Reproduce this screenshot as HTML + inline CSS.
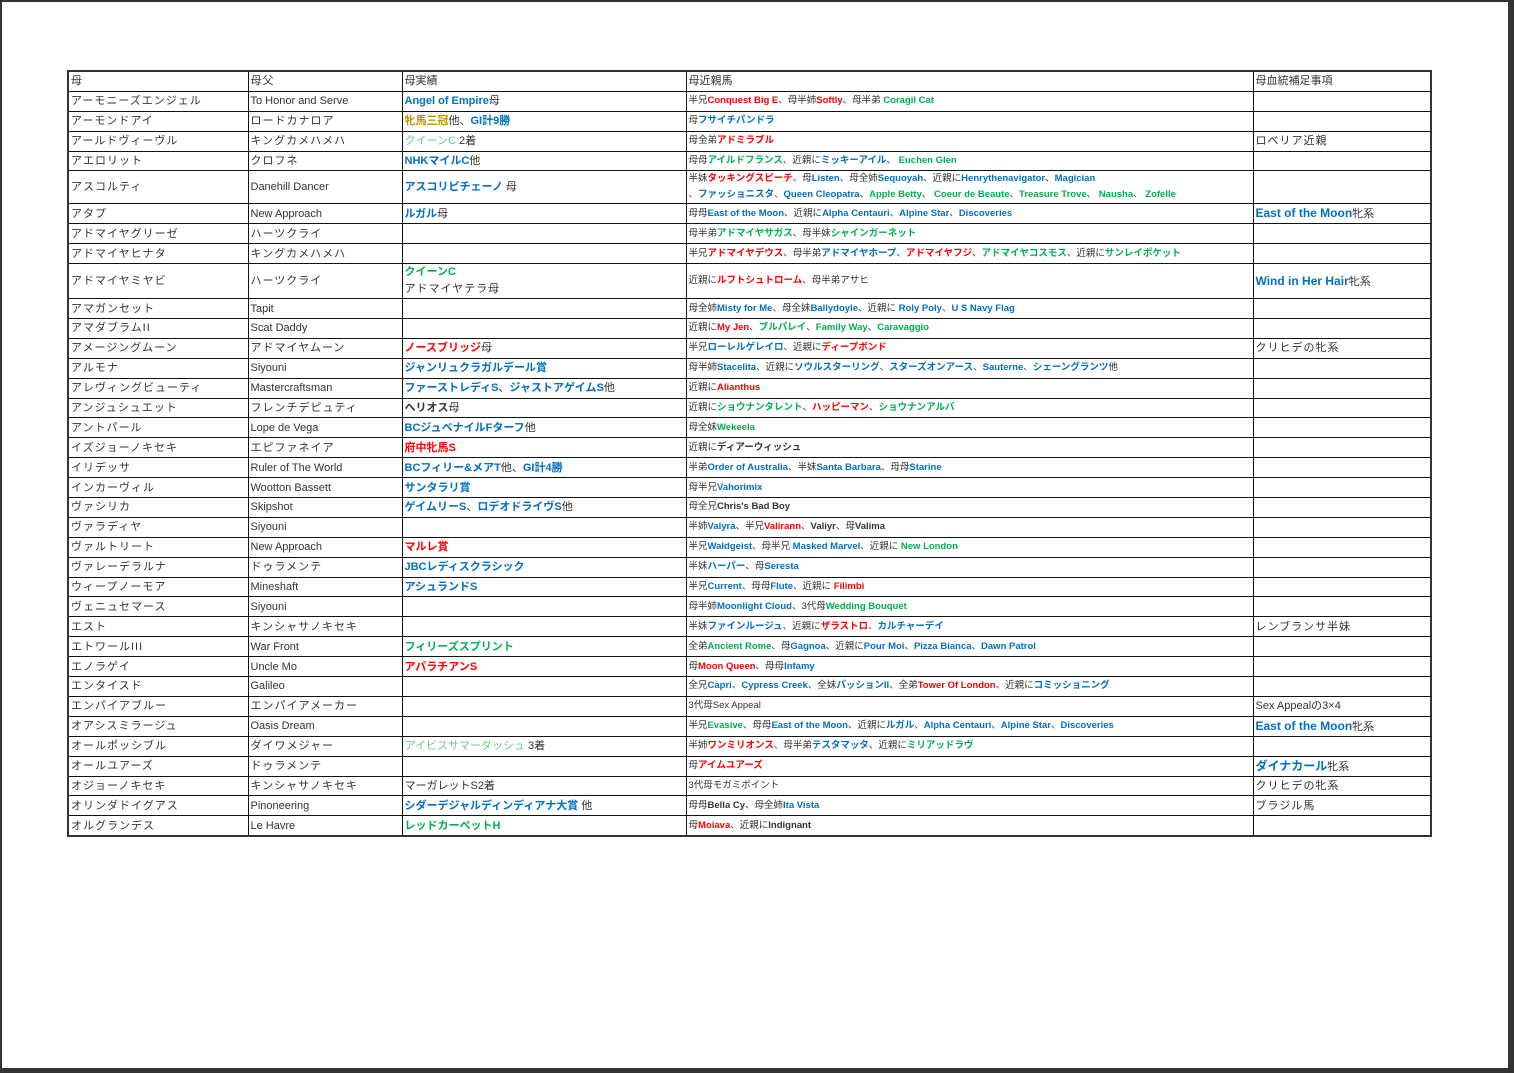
<!DOCTYPE html>
<html><head><meta charset="utf-8"><style>
html,body{margin:0;padding:0;}
body{width:1514px;height:1073px;background:#fff;position:relative;overflow:hidden;font-family:"Liberation Sans","Noto Sans CJK JP",sans-serif;}
.fr{position:absolute;left:0;top:0;width:1508px;height:1068px;border-top:2px solid #333;border-left:2px solid #333;box-sizing:border-box;}
.rt{position:absolute;right:0;top:0;width:6px;height:1073px;background:#333;}
.bt{position:absolute;left:0;bottom:0;width:1514px;height:5px;background:#333;}
table{position:absolute;left:67px;top:70px;border-collapse:collapse;border:2px solid #333;table-layout:fixed;}
td{border:1px solid #111;padding:0 2px;font-size:11px;color:#333;white-space:nowrap;overflow:hidden;height:18.9px;line-height:14px;vertical-align:middle;}
td.a,td.b{letter-spacing:1px;}
td.d{font-size:9.5px;}
b{font-weight:bold;}
.B{color:#0070c0;font-weight:bold}.R{color:#ff0000;font-weight:bold}.G{color:#00b050;font-weight:bold}.Y{color:#bf8f00;font-weight:bold}.g{color:#00b050}.gl{color:#66cc88}
.e b,.e .B{font-size:12px}
</style></head><body>
<div class="fr"></div><div class="rt"></div><div class="bt"></div>
<table>
<colgroup><col style="width:180px"><col style="width:154px"><col style="width:284px"><col style="width:567px"><col style="width:178px"></colgroup>
<tr><td class="a">母</td><td class="b">母父</td><td>母実績</td><td>母近親馬</td><td>母血統補足事項</td></tr>
<tr><td class="a">アーモニーズエンジェル</td><td>To Honor and Serve</td><td><span class="B">Angel of Empire</span>母</td><td class="d">半兄<span class="R">Conquest Big E</span>、母半姉<span class="R">Softly</span>、母半弟 <span class="G">Coragil Cat</span></td><td></td></tr>
<tr><td class="a">アーモンドアイ</td><td class="b">ロードカナロア</td><td><span class="Y">牝馬三冠</span>他、<span class="B">GI計9勝</span></td><td class="d">母<span class="B">フサイチパンドラ</span></td><td></td></tr>
<tr><td class="a">アールドヴィーヴル</td><td class="b">キングカメハメハ</td><td><span class="gl">クイーンC</span> 2着</td><td class="d">母全弟<span class="R">アドミラブル</span></td><td class="a">ロベリア近親</td></tr>
<tr><td class="a">アエロリット</td><td class="b">クロフネ</td><td><span class="B">NHKマイルC</span>他</td><td class="d">母母<span class="G">アイルドフランス</span>、近親に<span class="B">ミッキーアイル</span>、 <span class="G">Euchen Glen</span></td><td></td></tr>
<tr><td class="a" style="height:30px">アスコルティ</td><td>Danehill Dancer</td><td><span class="B">アスコリピチェーノ</span> 母</td><td class="d" style="line-height:16px">半妹<span class="R">タッキングスピーチ</span>、母<span class="B">Listen</span>、母全姉<span class="B">Sequoyah</span>、近親に<span class="B">Henrythenavigator</span>、<span class="B">Magician</span><br>、<span class="B">ファッショニスタ</span>、<span class="B">Queen Cleopatra</span>、<span class="G">Apple Betty</span>、 <span class="G">Coeur de Beaute</span>、<span class="G">Treasure Trove</span>、 <span class="G">Nausha</span>、 <span class="G">Zofelle</span></td><td></td></tr>
<tr><td class="a">アタプ</td><td>New Approach</td><td><span class="B">ルガル</span>母</td><td class="d">母母<span class="B">East of the Moon</span>、近親に<span class="B">Alpha Centauri</span>、<span class="B">Alpine Star</span>、<span class="B">Discoveries</span></td><td class="e"><span class="B">East of the Moon</span>牝系</td></tr>
<tr><td class="a">アドマイヤグリーゼ</td><td class="b">ハーツクライ</td><td></td><td class="d">母半弟<span class="G">アドマイヤサガス</span>、母半妹<span class="G">シャインガーネット</span></td><td></td></tr>
<tr><td class="a">アドマイヤヒナタ</td><td class="b">キングカメハメハ</td><td></td><td class="d">半兄<span class="R">アドマイヤデウス</span>、母半弟<span class="B">アドマイヤホープ</span>、<span class="R">アドマイヤフジ</span>、<span class="G">アドマイヤコスモス</span>、近親に<span class="G">サンレイポケット</span></td><td></td></tr>
<tr><td class="a" style="height:33px">アドマイヤミヤビ</td><td class="b">ハーツクライ</td><td style="line-height:17px"><span class="G">クイーンC</span><br><span style="letter-spacing:1px">アドマイヤテラ母</span></td><td class="d">近親に<span class="R">ルフトシュトローム</span>、母半弟アサヒ</td><td class="e"><span class="B">Wind in Her Hair</span>牝系</td></tr>
<tr><td class="a">アマガンセット</td><td>Tapit</td><td></td><td class="d">母全姉<span class="B">Misty for Me</span>、母全妹<span class="B">Ballydoyle</span>、近親に <span class="B">Roly Poly</span>、<span class="B">U S Navy Flag</span></td><td></td></tr>
<tr><td class="a">アマダブラムII</td><td>Scat Daddy</td><td></td><td class="d">近親に<span class="R">My Jen</span>、<span class="G">ブルパレイ</span>、<span class="G">Family Way</span>、<span class="G">Caravaggio</span></td><td></td></tr>
<tr><td class="a">アメージングムーン</td><td class="b">アドマイヤムーン</td><td><span class="R">ノースブリッジ</span>母</td><td class="d">半兄<span class="B">ローレルゲレイロ</span>、近親に<span class="R">ディープボンド</span></td><td class="a">クリヒデの牝系</td></tr>
<tr><td class="a">アルモナ</td><td>Siyouni</td><td><span class="B">ジャンリュクラガルデール賞</span></td><td class="d">母半姉<span class="B">Stacelita</span>、近親に<span class="B">ソウルスターリング</span>、<span class="B">スターズオンアース</span>、<span class="B">Sauterne</span>、<span class="B">シェーングランツ</span>他</td><td></td></tr>
<tr><td class="a">アレヴィングビューティ</td><td>Mastercraftsman</td><td><span class="B">ファーストレディS</span>、<span class="B">ジャストアゲイムS</span>他</td><td class="d">近親に<span class="R">Alianthus</span></td><td></td></tr>
<tr><td class="a">アンジュシュエット</td><td class="b">フレンチデピュティ</td><td><b>ヘリオス</b>母</td><td class="d">近親に<span class="G">ショウナンタレント</span>、<span class="R">ハッピーマン</span>、<span class="G">ショウナンアルバ</span></td><td></td></tr>
<tr><td class="a">アントパール</td><td>Lope de Vega</td><td><span class="B">BCジュベナイルFターフ</span>他</td><td class="d">母全妹<span class="G">Wekeela</span></td><td></td></tr>
<tr><td class="a">イズジョーノキセキ</td><td class="b">エピファネイア</td><td><span class="R">府中牝馬S</span></td><td class="d">近親に<b>ディアーウィッシュ</b></td><td></td></tr>
<tr><td class="a">イリデッサ</td><td>Ruler of The World</td><td><span class="B">BCフィリー&amp;メアT</span>他、<span class="B">GI計4勝</span></td><td class="d">半弟<span class="B">Order of Australia</span>、半妹<span class="B">Santa Barbara</span>、母母<span class="B">Starine</span></td><td></td></tr>
<tr><td class="a">インカーヴィル</td><td>Wootton Bassett</td><td><span class="B">サンタラリ賞</span></td><td class="d">母半兄<span class="B">Vahorimix</span></td><td></td></tr>
<tr><td class="a">ヴァシリカ</td><td>Skipshot</td><td><span class="B">ゲイムリーS</span>、<span class="B">ロデオドライヴS</span>他</td><td class="d">母全兄<b>Chris's Bad Boy</b></td><td></td></tr>
<tr><td class="a">ヴァラディヤ</td><td>Siyouni</td><td></td><td class="d">半姉<span class="B">Valyra</span>、半兄<span class="R">Valirann</span>、<b>Valiyr</b>、母<b>Valima</b></td><td></td></tr>
<tr><td class="a">ヴァルトリート</td><td>New Approach</td><td><span class="R">マルレ賞</span></td><td class="d">半兄<span class="B">Waldgeist</span>、母半兄 <span class="B">Masked Marvel</span>、近親に <span class="G">New London</span></td><td></td></tr>
<tr><td class="a">ヴァレーデラルナ</td><td class="b">ドゥラメンテ</td><td><span class="B">JBCレディスクラシック</span></td><td class="d">半妹<span class="B">ハーパー</span>、母<span class="B">Seresta</span></td><td></td></tr>
<tr><td class="a">ウィープノーモア</td><td>Mineshaft</td><td><span class="B">アシュランドS</span></td><td class="d">半兄<span class="B">Current</span>、母母<span class="B">Flute</span>、近親に <span class="R">Filimbi</span></td><td></td></tr>
<tr><td class="a">ヴェニュセマース</td><td>Siyouni</td><td></td><td class="d">母半姉<span class="B">Moonlight Cloud</span>、3代母<span class="G">Wedding Bouquet</span></td><td></td></tr>
<tr><td class="a">エスト</td><td class="b">キンシャサノキセキ</td><td></td><td class="d">半妹<span class="B">ファインルージュ</span>、近親に<span class="R">ザラストロ</span>、<span class="B">カルチャーデイ</span></td><td class="a">レンブランサ半妹</td></tr>
<tr><td class="a">エトワールIII</td><td>War Front</td><td><span class="G">フィリーズスプリント</span></td><td class="d">全弟<span class="G">Ancient Rome</span>、母<span class="B">Gagnoa</span>、近親に<span class="B">Pour Moi</span>、<span class="B">Pizza Bianca</span>、<span class="B">Dawn Patrol</span></td><td></td></tr>
<tr><td class="a">エノラゲイ</td><td>Uncle Mo</td><td><span class="R">アパラチアンS</span></td><td class="d">母<span class="R">Moon Queen</span>、母母<span class="B">Infamy</span></td><td></td></tr>
<tr><td class="a">エンタイスド</td><td>Galileo</td><td></td><td class="d">全兄<span class="B">Capri</span>、<span class="B">Cypress Creek</span>、全妹<span class="B">パッションII</span>、全弟<span class="R">Tower Of London</span>、近親に<span class="B">コミッショニング</span></td><td></td></tr>
<tr><td class="a">エンパイアブルー</td><td class="b">エンパイアメーカー</td><td></td><td class="d">3代母Sex Appeal</td><td>Sex Appealの3×4</td></tr>
<tr><td class="a">オアシスミラージュ</td><td>Oasis Dream</td><td></td><td class="d">半兄<span class="G">Evasive</span>、母母<span class="B">East of the Moon</span>、近親に<span class="B">ルガル</span>、<span class="B">Alpha Centauri</span>、<span class="B">Alpine Star</span>、<span class="B">Discoveries</span></td><td class="e"><span class="B">East of the Moon</span>牝系</td></tr>
<tr><td class="a">オールポッシブル</td><td class="b">ダイワメジャー</td><td><span class="gl">アイビスサマーダッシュ</span> 3着</td><td class="d">半姉<span class="R">ワンミリオンス</span>、母半弟<span class="B">テスタマッタ</span>、近親に<span class="G">ミリアッドラヴ</span></td><td></td></tr>
<tr><td class="a">オールユアーズ</td><td class="b">ドゥラメンテ</td><td></td><td class="d">母<span class="R">アイムユアーズ</span></td><td class="e"><span class="B">ダイナカール</span>牝系</td></tr>
<tr><td class="a">オジョーノキセキ</td><td class="b">キンシャサノキセキ</td><td>マーガレットS2着</td><td class="d">3代母モガミポイント</td><td class="a">クリヒデの牝系</td></tr>
<tr><td class="a">オリンダドイグアス</td><td>Pinoneering</td><td><span class="B">シダーデジャルディンディアナ大賞</span> 他</td><td class="d">母母<b>Bella Cy</b>、母全姉<span class="B">Ita Vista</span></td><td class="a">ブラジル馬</td></tr>
<tr><td class="a">オルグランデス</td><td>Le Havre</td><td><span class="G">レッドカーペットH</span></td><td class="d">母<span class="R">Moiava</span>、近親に<b>Indignant</b></td><td></td></tr>
</table>
</body></html>
